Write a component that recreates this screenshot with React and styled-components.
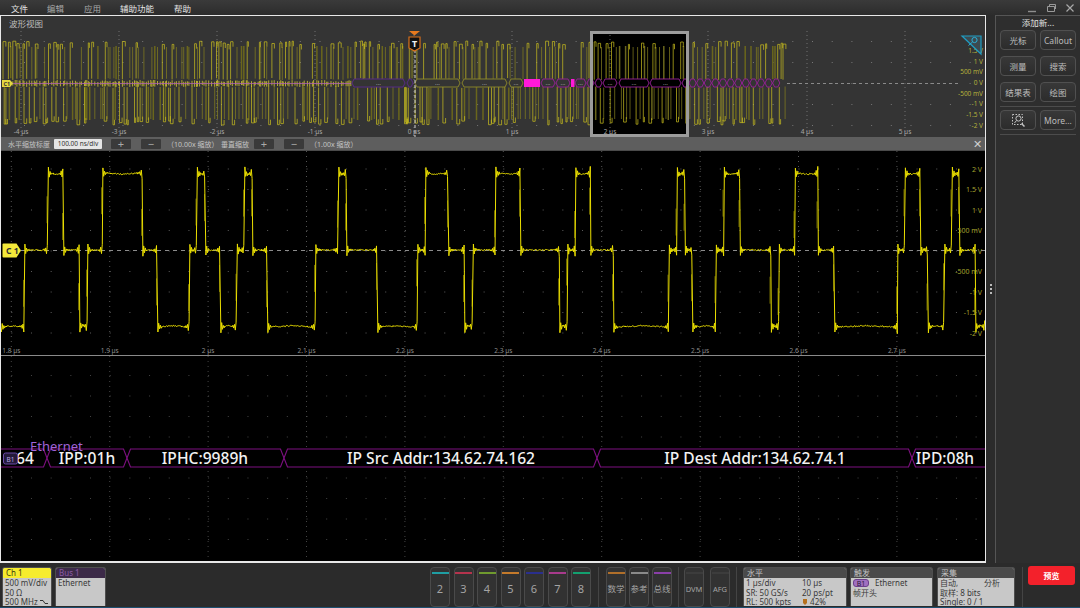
import React from 'react';
import styled, { createGlobalStyle } from 'styled-components';

const GlobalStyle = createGlobalStyle`
  html, body { margin: 0; padding: 0; background: #2b2b2b; }
  * { box-sizing: border-box; }
`;

const FONT = `"Noto Sans", "Noto Sans CJK SC", sans-serif`;

// small seeded random so the traces stay the same on every load
const makeRandom = (seed) => {
  let s = seed;
  return () => {
    s = (s * 16807) % 2147483647;
    return (s - 1) / 2147483646;
  };
};

const HIGH = 173;
const MID = 250;
const LOW = 327;

// [start x, level] of each stretch of the zoomed trace
const edges = [
  [1, LOW], [24.5, MID], [48, HIGH], [63.5, MID], [79.5, LOW], [87.5, MID], [102.5, HIGH], [142.5, MID],
  [157.5, LOW], [189.5, MID], [197, HIGH], [205.5, MID], [220.5, LOW], [237, MID], [244.5, HIGH], [252.5, MID],
  [267.5, LOW], [315.5, MID], [338.5, HIGH], [346.5, MID], [377.5, LOW], [417.5, MID], [425.5, HIGH], [448.5, MID],
  [464.5, LOW], [473, MID], [495.5, HIGH], [520.5, MID], [559.5, LOW], [567.5, MID], [575.5, HIGH], [590.5, MID],
  [613.5, LOW], [669, MID], [677, HIGH], [685, MID], [692.5, LOW], [716, MID], [724, HIGH], [740, MID],
  [771, LOW], [779, MID], [795, HIGH], [818, MID], [834.5, LOW], [897.5, MID], [905, HIGH], [920.5, MID],
  [928, LOW], [944.5, MID], [952, HIGH], [959.5, MID], [975.5, LOW], [985, LOW],
];

const buildTrace = () => {
  const rnd = makeRandom(4711);
  const pts = [];
  let dim = '';
  for (let i = 0; i < edges.length - 1; i++) {
    const [x0, y] = edges[i];
    const x1 = edges[i + 1][0];
    const prev = i > 0 ? edges[i - 1][1] : y;
    const dir = y < prev ? -1 : 1;
    const mid = (x0 + x1) / 2;
    let sign = dir;
    for (let x = x0 + 0.4; x < x1 - 0.2; x += 0.8) {
      const d = Math.min(x - x0, x1 - x);
      const amp = 7 * Math.exp(-d / 1.8);
      const bow = y === MID ? 0 : (dir < 0 ? 1 : -1) * 2 * (1 - Math.abs(x - mid) / Math.max(1, (x1 - x0) / 2));
      pts.push(`${x.toFixed(1)},${(y + bow * 0.6 + sign * amp + (rnd() - 0.5) * 1.3).toFixed(1)}`);
      sign = -sign;
    }
    if (i > 0) {
      // the smeared part of each edge
      const from = prev + (y - prev) * (0.15 + rnd() * 0.4);
      dim += `M${(x0 - 1).toFixed(1)} ${from.toFixed(1)}L${(x0 - 1).toFixed(1)} ${(from + (y - prev) * 0.35).toFixed(1)}`;
    }
  }
  return { line: `M${pts.join(' L')}`, dim };
};

const buildOverview = () => {
  const rnd = makeRandom(20231);
  let bright = '';
  let mid = '';
  let dim = '';
  let noise = '';
  let x = 3;
  let up = true;
  while (x < 786) {
    // mostly alternate so both halves of the strip fill evenly
    up = rnd() > 0.25 ? !up : up;
    const cap = up ? 41 + rnd() * 4 : 121 + rnd() * 4;
    const inner = up ? 78 + rnd() * 2 : 86 + rnd() * 2;
    const w = 1 + rnd() * 2;
    const kind = rnd();
    if (kind < 0.5) {
      bright += `M${x.toFixed(1)} ${inner.toFixed(1)}L${x.toFixed(1)} ${cap.toFixed(1)}L${(x + w).toFixed(1)} ${cap.toFixed(1)}L${(x + w).toFixed(1)} ${(up ? cap + 5 : cap - 5).toFixed(1)}`;
    } else if (kind < 0.85) {
      mid += `M${x.toFixed(1)} ${inner.toFixed(1)}L${x.toFixed(1)} ${up ? 47 : 119}`;
    } else {
      dim += `M${x.toFixed(1)} ${inner.toFixed(1)}L${x.toFixed(1)} ${up ? 46 : 120}`;
    }
    if (x < 352) noise += `M${x.toFixed(1)} ${(80 + rnd() * 2).toFixed(1)}L${x.toFixed(1)} ${(85 + rnd() * 2).toFixed(1)}`;
    x += 0.9 + rnd() * 2.4;
  }
  return { bright, mid, dim, noise };
};

const hex = (x0, x1, y, h, n) =>
  `M${x0} ${y}L${x0 + n} ${y - h}L${x1 - n} ${y - h}L${x1} ${y}L${x1 - n} ${y + h}L${x0 + n} ${y + h}Z`;

const range = (from, to, step) => {
  const out = [];
  for (let v = from; v <= to; v += step) out.push(v);
  return out;
};

const overviewBus = [
  [352, 405, '#5b2a8f', true], [407, 413, '#5b2a8f', false],
  [415, 460, '#8f8a2a', true], [462, 507, '#8f8a2a', true], [509, 523, '#8f8a2a', true],
  [541, 555, '#9a1f9a', true], [556, 570, '#9a1f9a', true], [575, 586, '#9a1f9a', true],
  [587, 594, '#9a1f9a', false], [595, 602, '#9a1f9a', false], [603, 617, '#9a1f9a', true],
  [619, 649, '#9a1f9a', true], [650, 681, '#9a1f9a', true], [682, 688, '#9a1f9a', false],
  ...range(689, 778, 7.6).map((v) => [v, v + 7.2, '#9a1f9a', false]),
];

const overviewTimes = [
  [21, '-4 µs'], [119, '-3 µs'], [217, '-2 µs'], [315, '-1 µs'], [414, '0 µs'],
  [512, '1 µs'], [610, '2 µs'], [708, '3 µs'], [807, '4 µs'], [905, '5 µs'],
];
const overviewVolts = [
  [53, '1.5 V'], [64, '1 V'], [74, '500 mV'], [85, '0 V'], [96, '-500 mV'], [106, '-1 V'], [117, '-1.5 V'], [128, '-2 V'],
];
const mainTimes = ['1.8 µs', '1.9 µs', '2 µs', '2.1 µs', '2.2 µs', '2.3 µs', '2.4 µs', '2.5 µs', '2.6 µs', '2.7 µs'];
const mainVolts = ['2 V', '1.5 V', '1 V', '500 mV', '0 V', '-500 mV', '-1 V', '-1.5 V', '-2 V'];
const busFields = [
  [-20, 47, '64', 25],
  [47, 127, 'IPP:01h', 87],
  [127, 284, 'IPHC:9989h', 205],
  [284, 597, 'IP Src Addr:134.62.74.162', 441],
  [597, 912, 'IP Dest Addr:134.62.74.1', 755],
  [912, 1010, 'IPD:08h', 945],
];
const majors = range(0, 9, 1).map((i) => 11.3 + i * 98.4);

const channels = [
  ['2', '#1f9ea3'], ['3', '#b5334d'], ['4', '#6f9a2e'], ['5', '#c47a2b'], ['6', '#2a2f8e'], ['7', '#a83a8c'], ['8', '#13a06f'],
];

const Page = styled.div`
  width: 1080px;
  height: 608px;
  display: flex;
  flex-direction: column;
  overflow: hidden;
  background: #2b2b2b;
  font-family: ${FONT};
`;

const MenuBar = styled.div`
  height: 15px;
  flex: none;
  display: flex;
  align-items: center;
  padding-left: 11px;
  background: linear-gradient(#3a3a3a, #2c2c2c);
`;

const MenuItem = styled.span`
  width: ${(p) => p.$w}px;
  font-size: 8.5px;
  color: ${(p) => (p.$on ? '#e4e4e4' : '#a8a8a8')};
`;

const WindowButtons = styled.div`
  margin-left: auto;
  margin-right: 5px;
  display: flex;
  align-items: center;
  gap: 9px;
`;

const Body = styled.div`
  flex: 1;
  display: flex;
  min-height: 0;
`;

const Frame = styled.div`
  width: 986px;
  flex: none;
  display: flex;
  flex-direction: column;
  border: 1px solid #e8e8e8;
  border-bottom-width: 2px;
`;

const FrameTitle = styled.div`
  height: 15px;
  flex: none;
  padding-left: 8px;
  font-size: 8.5px;
  line-height: 15px;
  color: #bdbdbd;
  background: #343434;
`;

const Plot = styled.svg`
  display: block;
  flex: none;
  background: ${(p) => p.$bg};
`;

const PlotText = styled.text`
  font-family: ${FONT};
  font-size: ${(p) => p.$size || 6.5}px;
  font-weight: ${(p) => p.$weight || 400};
  fill: ${(p) => p.$fill || '#9a9a9a'};
`;

const ZoomBar = styled.div`
  height: 14px;
  flex: none;
  display: flex;
  align-items: center;
  padding-left: 7px;
  background: #5e5e5e;
  border-bottom: 1px solid #4a4a4a;
`;

const ZoomLabel = styled.span`
  width: ${(p) => p.$w}px;
  font-size: 7px;
  white-space: nowrap;
  color: #c4c4c4;
`;

const ScaleInput = styled.span`
  width: 48px;
  height: 10px;
  margin-right: 9px;
  font-size: 6.5px;
  line-height: 10px;
  text-align: center;
  color: #333;
  background: #e6e6e6;
  border-radius: 1px;
`;

const StepButton = styled.span`
  width: 20px;
  height: 10px;
  margin-right: ${(p) => p.$after}px;
  display: flex;
  align-items: center;
  justify-content: center;
  font-size: 11px;
  line-height: 10px;
  color: #aaa;
  background: #3a3a3a;
  border-radius: 1px;
`;

const CloseMark = styled.span`
  margin-left: auto;
  margin-right: 3px;
  font-size: 11px;
  line-height: 12px;
  color: #d0d0d0;
`;

const Divider = styled.div`
  height: 1px;
  flex: none;
  background: #8a8a8a;
`;

const Grip = styled.div`
  width: 9px;
  flex: none;
  display: flex;
  flex-direction: column;
  align-items: center;
  justify-content: center;
  gap: 2px;
  background: #2b2b2b;
`;

const GripDot = styled.i`
  width: 2px;
  height: 2px;
  background: #bbb;
`;

const Side = styled.div`
  flex: 1;
  padding: 0 4px;
  background: #2e2e2e;
  border-left: 1px solid #555;
  border-top: 1px solid #555;
`;

const SideTitle = styled.div`
  height: 14px;
  font-size: 8.5px;
  line-height: 13px;
  text-align: center;
  color: #e2e2e2;
`;

const SideGrid = styled.div`
  display: grid;
  grid-template-columns: 36px 36px;
  grid-auto-rows: 20px;
  gap: 6px 4px;
`;

const SideButton = styled.div`
  display: flex;
  align-items: center;
  justify-content: center;
  font-size: 8.5px;
  color: #bdbdbd;
  background: linear-gradient(#383838, #2c2c2c);
  border: 1px solid #505050;
  border-radius: 4px;
`;

const SideRule = styled.div`
  height: 1px;
  margin: ${(p) => p.$m};
  background: #4c4c4c;
`;

const Dock = styled.div`
  height: 45px;
  flex: none;
  display: flex;
  padding: 4px 0 1px 2px;
  background: #2b2b2b;
  border-bottom: 1px solid #1d4f70;
`;

const Badge = styled.div`
  width: ${(p) => p.$w}px;
  margin-left: ${(p) => p.$ml || 0}px;
  display: flex;
  flex-direction: column;
  overflow: hidden;
  background: #c8c8c8;
  border-radius: 3px 3px 0 0;
  border: 1px solid #4e4e4e;
  border-bottom: 0;
`;

const BadgeHead = styled.div`
  height: 10px;
  flex: none;
  padding-left: ${(p) => p.$pl || 3}px;
  font-size: 8px;
  line-height: 10px;
  color: ${(p) => p.$color};
  background: ${(p) => p.$bg};
`;

const BadgeRow = styled.div`
  height: 9.5px;
  display: flex;
  align-items: center;
  padding-left: 2px;
  font-size: 8px;
  line-height: 9.5px;
  white-space: nowrap;
  color: #3a3a3a;
`;

const Cell = styled.span`
  width: ${(p) => p.$w}px;
  flex: none;
`;

const Pill = styled.span`
  width: 16px;
  height: 8px;
  margin-right: 6px;
  font-size: 7px;
  line-height: 7px;
  text-align: center;
  color: #2b1a38;
  background: #a070c0;
  border: 1px solid #6c3f8c;
  border-radius: 3px;
`;

const DockGroup = styled.div`
  margin-left: ${(p) => p.$ml}px;
  display: flex;
  gap: ${(p) => p.$gap}px;
`;

const DockKey = styled.div`
  width: 20px;
  height: 40px;
  display: flex;
  flex-direction: column;
  align-items: center;
  padding-top: 4px;
  background: #323232;
  border: 1px solid #4a4a4a;
  border-radius: 4px;
`;

const KeyStrip = styled.i`
  width: 17px;
  height: 2px;
  background: ${(p) => p.$color};
`;

const KeyLabel = styled.span`
  margin-top: 9px;
  font-size: ${(p) => p.$size}px;
  line-height: 12px;
  white-space: nowrap;
  color: #a4a4a4;
`;

const DockSep = styled.i`
  width: 1px;
  height: 40px;
  margin-left: ${(p) => p.$ml}px;
  background: #444;
`;

const RunButton = styled.div`
  width: 47px;
  height: 19px;
  margin: -1px 0 0 5px;
  display: flex;
  align-items: center;
  justify-content: center;
  font-size: 8px;
  font-weight: 700;
  color: #fff;
  background: #f3212b;
  border-radius: 3px;
`;

const YELLOW = '#ebdf00';

function Overview() {
  const wave = React.useMemo(buildOverview, []);
  const dots = range(41, 125, 21).flatMap((y) => range(24, 984, 19.7).map((x) => [x, y]));
  return (
    <Plot $bg="#343434" width="984" height="106" viewBox="1 31 984 106">
      {dots.map(([x, y]) => (
        <rect key={`${x}-${y}`} x={x} y={y} width="1" height="1" fill="#777" />
      ))}
      <rect x="592" y="33" width="95" height="102" fill="#000" />
      {overviewTimes.map(([x]) => (
        <line key={x} x1={x} x2={x} y1="31" y2="137" stroke="#808080" strokeWidth="0.8" strokeDasharray="1 3" />
      ))}
      <line x1="787" x2="960" y1="83.5" y2="83.5" stroke="#8a8a8a" strokeDasharray="3 3" />
      <path d={wave.dim} stroke="#6a661c" strokeWidth="1.5" fill="none" />
      <path d={wave.mid} stroke="#86811e" strokeWidth="0.7" fill="none" />
      <path d={wave.bright} stroke="#cdc21e" strokeWidth="0.7" fill="none" />
      <path d={wave.noise} stroke="#d8cc30" strokeWidth="0.8" fill="none" />
      <line x1="12" x2="351" y1="83.5" y2="83.5" stroke="#b060b0" strokeWidth="0.8" />
      {overviewBus.map(([a, b, color, label]) => (
        <g key={a}>
          <path d={hex(a, b, 83, 4, 2)} fill={a > 590 && a < 688 ? '#000' : '#343434'} stroke={color} strokeWidth="0.9" />
          {label && <PlotText x={(a + b) / 2} y="85" textAnchor="middle" $size={6} $fill="#b0b0b0">...</PlotText>}
        </g>
      ))}
      <rect x="524" y="79" width="16" height="8" fill="#ff19d8" />
      <rect x="571" y="79" width="3.5" height="8" fill="#ff19d8" />
      <rect x="591.5" y="32.5" width="96" height="103" fill="none" stroke="#9c9c9c" strokeWidth="3" />
      <path d="M2 80h8l3 3.5-3 3.5H2z" fill="#e3d840" />
      <PlotText x="3.5" y="85.5" $size={5.5} $fill="#333" $weight={700}>C1</PlotText>

      {overviewTimes.map(([x, t]) => (
        <PlotText key={t} x={x} y="134" textAnchor="middle" $size={6.5} $fill="#a8a8a8">{t}</PlotText>
      ))}
      {overviewVolts.map(([y, t]) => (
        <PlotText key={t} x="983" y={y} textAnchor="end" $size={6.5} $fill="#b3b03c">{t}</PlotText>
      ))}

      {/* trigger marker */}
      <line x1="415" x2="415" y1="50" y2="137" stroke="#d0d0d0" strokeDasharray="3 2" />
      <path d="M409 31h11l-5.5 4.5z" fill="#e87a1e" />
      <path d="M409 37h11v11l-5.5 3-5.5-3z" fill="#111" stroke="#d9701c" strokeWidth="1.2" />
      <PlotText x="414.5" y="46.5" textAnchor="middle" $size={9} $weight={700} $fill="#f0f0f0">T</PlotText>

      {/* cursor corner */}
      <path d="M962 36h19v18z" fill="#3c4a50" stroke="#1f9dc4" strokeWidth="1.2" />
      <circle cx="974.5" cy="40" r="2.6" fill="none" stroke="#2bb0d8" strokeWidth="1" />
      <path d="M972.5 42l-4 3.5" stroke="#2bb0d8" />
    </Plot>
  );
}

function MainTrace() {
  const trace = React.useMemo(buildTrace, []);
  const rows = range(168.5, 333, 20.5);
  const cols = range(11.3, 985, 19.68);
  return (
    <Plot $bg="#000" width="984" height="204" viewBox="1 151 984 204">
      {rows.map((y) =>
        cols.map((x) => <rect key={`${x}-${y}`} x={x} y={y} width="1" height="1" fill="#5c5c5c" />)
      )}
      {majors.map((x) => (
        <line key={x} x1={x} x2={x} y1="151" y2="355" stroke="#6a6a6a" strokeWidth="0.8" strokeDasharray="1 4" />
      ))}
      <line x1="21" x2="985" y1="250.5" y2="250.5" stroke="#8c8c8c" strokeDasharray="4 4" />
      <path d={trace.dim} fill="none" stroke="#6e6800" strokeWidth="1" />
      <path d={trace.line} fill="none" stroke={YELLOW} strokeWidth="1" strokeLinejoin="round" />
      <path d="M3.5 243.5h13l4.5 7-4.5 7h-13a1 1 0 0 1-1-1v-12a1 1 0 0 1 1-1z" fill="#f4e93a" />
      <PlotText x="6" y="253.5" $size={8.5} $weight={700} $fill="#333">C 1</PlotText>
      {mainTimes.map((t, i) => (
        <PlotText key={t} x={majors[i]} y="353" textAnchor="middle" $size={6.5} $fill="#8e8e8e">{t}</PlotText>
      ))}
      {mainVolts.map((t, i) => (
        <PlotText key={t} x="982" y={171.5 + i * 20.5} textAnchor="end" $size={7} $fill="#a3a02c">{t}</PlotText>
      ))}
    </Plot>
  );
}

function BusTrace() {
  const rows = range(375, 555, 20.5);
  const cols = range(11.3, 985, 19.68);
  return (
    <Plot $bg="#000" width="984" height="205" viewBox="1 356 984 205">
      {rows.map((y) =>
        cols.map((x) => <rect key={`${x}-${y}`} x={x} y={y} width="1" height="1" fill="#444" />)
      )}
      {majors.map((x) => (
        <line key={x} x1={x} x2={x} y1="356" y2="561" stroke="#555" strokeWidth="0.8" strokeDasharray="1 4" />
      ))}
      {busFields.map(([a, b, label, c]) => (
        <g key={label}>
          <path d={hex(a, b, 458, 9, 3.5)} fill="#000" stroke="#7d1080" strokeWidth="1.1" />
          <PlotText x={c} y="463.5" textAnchor="middle" $size={15.6} $weight={500} $fill="#f2f2f2">{label}</PlotText>
        </g>
      ))}
      <rect x="3.5" y="453" width="14" height="11" rx="2" fill="#241a3a" stroke="#6a4aa8" />
      <PlotText x="10.5" y="461.5" textAnchor="middle" $size={6.5} $fill="#b9a6e0">B1</PlotText>
      <PlotText x="30" y="451" $size={13} $fill="#a064d8">Ethernet</PlotText>
    </Plot>
  );
}

function App() {
  return (
    <Page>
      <GlobalStyle />
      <MenuBar>
        <MenuItem $w={36} $on>文件</MenuItem>
        <MenuItem $w={37}>编辑</MenuItem>
        <MenuItem $w={36}>应用</MenuItem>
        <MenuItem $w={54} $on>辅助功能</MenuItem>
        <MenuItem $w={36} $on>帮助</MenuItem>
        <WindowButtons>
          <svg width="10" height="10" viewBox="0 0 10 10"><path d="M1 8.5h8" stroke="#8e8e8e" strokeWidth="1.4" /></svg>
          <svg width="10" height="10" viewBox="0 0 10 10" fill="none" stroke="#9a9a9a"><path d="M1.5 3.5h7v5h-7zM3.5 3V1.5h6V6" /></svg>
          <svg width="10" height="10" viewBox="0 0 10 10"><path d="M1.5 1.5l7 7M8.5 1.5l-7 7" stroke="#a8a8a8" strokeWidth="1.2" /></svg>
        </WindowButtons>
      </MenuBar>

      <Body>
        <Frame>
          <FrameTitle>波形视图</FrameTitle>
          <Overview />
          <ZoomBar>
            <ZoomLabel $w={46}>水平缩放标度</ZoomLabel>
            <ScaleInput>100.00 ns/div</ScaleInput>
            <StepButton $after={10}>+</StepButton>
            <StepButton $after={6}>−</StepButton>
            <ZoomLabel $w={54}>（10.00x 缩放）</ZoomLabel>
            <ZoomLabel $w={33}>垂直缩放</ZoomLabel>
            <StepButton $after={10}>+</StepButton>
            <StepButton $after={6}>−</StepButton>
            <ZoomLabel $w={44}>（1.00x 缩放）</ZoomLabel>
            <CloseMark>✕</CloseMark>
          </ZoomBar>
          <MainTrace />
          <Divider />
          <BusTrace />
        </Frame>

        <Grip>
          <GripDot />
          <GripDot />
          <GripDot />
        </Grip>

        <Side>
          <SideTitle>添加新...</SideTitle>
          <SideGrid>
            <SideButton>光标</SideButton>
            <SideButton>Callout</SideButton>
            <SideButton>测量</SideButton>
            <SideButton>搜索</SideButton>
            <SideButton>结果表</SideButton>
            <SideButton>绘图</SideButton>
          </SideGrid>
          <SideRule $m="4px 0 3px" />
          <SideGrid>
            <SideButton>
              <svg width="14" height="14" viewBox="0 0 14 14" fill="none" stroke="#c4c4c4">
                <path d="M1.5 1.5h10v10h-10z" strokeDasharray="1.5 1.5" />
                <circle cx="7.5" cy="5.5" r="2.6" />
                <path d="M5.5 7.5l-2 2.5" />
                <path d="M10.5 10.5l3 3" strokeWidth="1.5" />
              </svg>
            </SideButton>
            <SideButton>More...</SideButton>
          </SideGrid>
          <SideRule $m="4px 0 0" />
        </Side>
      </Body>

      <Dock>
        <Badge $w={50}>
          <BadgeHead $bg="#f6ec2e" $color="#3a3a10">Ch 1</BadgeHead>
          <BadgeRow>500 mV/div</BadgeRow>
          <BadgeRow>50 Ω</BadgeRow>
          <BadgeRow>
            <Cell $w={35}>500 MHz</Cell>
            <svg width="8" height="6" viewBox="0 0 8 6" fill="none" stroke="#333"><path d="M0 1.5h3l2 3h3" /></svg>
          </BadgeRow>
        </Badge>
        <Badge $w={51} $ml={3}>
          <BadgeHead $bg="#3c2a48" $color="#8a5aa8">Bus 1</BadgeHead>
          <BadgeRow>Ethernet</BadgeRow>
        </Badge>

        <DockGroup $ml={324} $gap={3.5}>
          {channels.map(([n, c]) => (
            <DockKey key={n}>
              <KeyStrip $color={c} />
              <KeyLabel $size={11}>{n}</KeyLabel>
            </DockKey>
          ))}
        </DockGroup>
        <DockSep $ml={7} />
        <DockGroup $ml={7} $gap={3}>
          <DockKey><KeyStrip $color="#b06f2a" /><KeyLabel $size={8.5}>数学</KeyLabel></DockKey>
          <DockKey><KeyStrip $color="#8a8a8a" /><KeyLabel $size={8.5}>参考</KeyLabel></DockKey>
          <DockKey><KeyStrip $color="#8a3fa8" /><KeyLabel $size={8.5}>总线</KeyLabel></DockKey>
        </DockGroup>
        <DockSep $ml={6} />
        <DockGroup $ml={5} $gap={6}>
          <DockKey><KeyStrip $color="#3c3c3c" /><KeyLabel $size={7.5}>DVM</KeyLabel></DockKey>
          <DockKey><KeyStrip $color="#3c3c3c" /><KeyLabel $size={7.5}>AFG</KeyLabel></DockKey>
        </DockGroup>
        <DockSep $ml={6} />

        <Badge $w={104} $ml={6}>
          <BadgeHead $bg="#4a4a4a" $color="#c4c4c4">水平</BadgeHead>
          <BadgeRow><Cell $w={56}>1 µs/div</Cell>10 µs</BadgeRow>
          <BadgeRow><Cell $w={56}>SR: 50 GS/s</Cell>20 ps/pt</BadgeRow>
          <BadgeRow>
            <Cell $w={57}>RL: 500 kpts</Cell>
            <svg width="5" height="6" viewBox="0 0 5 6"><path d="M0 0h4v4l-2 2-2-2z" fill="#b5701e" /></svg>
            &nbsp;42%
          </BadgeRow>
        </Badge>
        <Badge $w={83} $ml={3}>
          <BadgeHead $bg="#4a4a4a" $color="#c4c4c4">触发</BadgeHead>
          <BadgeRow><Pill>B1</Pill>Ethernet</BadgeRow>
          <BadgeRow>帧开头</BadgeRow>
        </Badge>
        <Badge $w={78} $ml={4}>
          <BadgeHead $bg="#4a4a4a" $color="#c4c4c4">采集</BadgeHead>
          <BadgeRow><Cell $w={44}>自动,</Cell>分析</BadgeRow>
          <BadgeRow>取样: 8 bits</BadgeRow>
          <BadgeRow>Single: 0 / 1</BadgeRow>
        </Badge>
        <DockSep $ml={7} />
        <RunButton>预览</RunButton>
      </Dock>
    </Page>
  );
}

export default App;
